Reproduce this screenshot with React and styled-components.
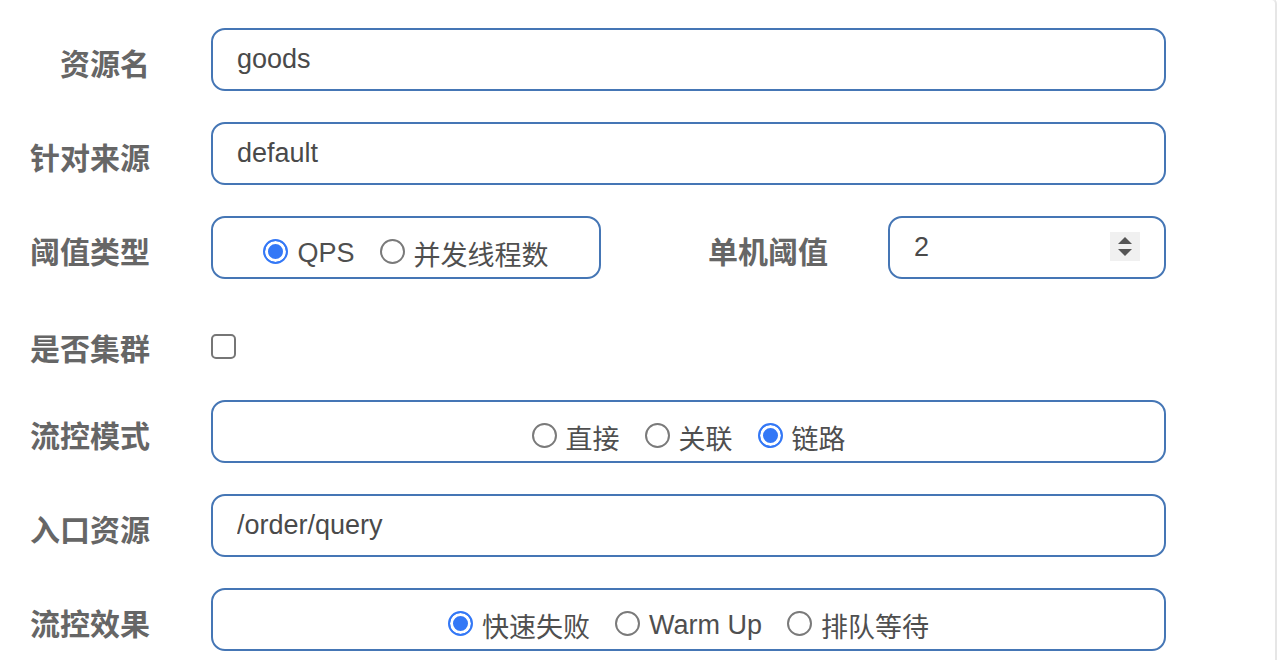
import React, { useState } from "react";
import styled, { createGlobalStyle, css } from "styled-components";

const GlobalStyle = createGlobalStyle`
  html, body {
    margin: 0;
    padding: 0;
    background: #ffffff;
  }
  body {
    font-family: "Liberation Sans", "Noto Sans CJK SC", sans-serif;
  }
`;

const Panel = styled.div`
  width: 1277px;
  height: 662px;
  box-sizing: border-box;
  border-right: 2px solid #e6e6e6;
  border-top: 2px solid #ececec;
  border-top-right-radius: 6px;
  margin-top: -2px;
  background: #fff;
  overflow: hidden;
`;

const Form = styled.div`
  display: flex;
  flex-direction: column;
  gap: 31px;
  padding-top: 28px;
`;

const Row = styled.div`
  box-sizing: border-box;
  display: flex;
  align-items: center;
  height: ${(p) => p.h || 63}px;
  ${(p) => p.shift && css`padding-top: ${p.shift}px;`}
`;

const Label = styled.div`
  width: ${(p) => p.w || 150}px;
  flex: none;
  text-align: right;
  font-size: 30px;
  font-weight: bold;
  color: #666;
  padding-top: ${(p) => p.drop ?? 4}px;
  margin-right: ${(p) => p.gap ?? 61}px;
  white-space: nowrap;
`;

const Box = styled.div`
  box-sizing: border-box;
  width: ${(p) => p.w || 955}px;
  height: 63px;
  flex: none;
  border: 2px solid #4576b5;
  border-radius: 14px;
  display: flex;
  align-items: center;
  position: relative;
`;

const Input = styled.input`
  border: none;
  outline: none;
  background: transparent;
  width: 100%;
  padding: 0 0 0 24px;
  font-family: inherit;
  font-size: 27px;
  color: #4a4a4a;
`;

const Spinner = styled.div`
  position: absolute;
  right: 24px;
  top: 14px;
  width: 30px;
  height: 29px;
  background: #f0f0f0;
  display: flex;
  flex-direction: column;
  align-items: center;
  justify-content: center;
  gap: 5px;
`;

const Tri = styled.span`
  width: 0;
  height: 0;
  border-left: 7px solid transparent;
  border-right: 7px solid transparent;
  ${(p) =>
    p.down
      ? css`border-top: 7px solid #555;`
      : css`border-bottom: 7px solid #555;`}
`;

const Group = styled.div`
  display: flex;
  align-items: center;
  justify-content: center;
  width: 100%;
  padding-top: 11px;
  gap: 25px;
`;

const Option = styled.label`
  display: flex;
  align-items: center;
  gap: 9px;
  font-size: 27px;
  color: #4f4f4f;
  cursor: pointer;
  white-space: nowrap;
`;

const Dot = styled.span`
  box-sizing: border-box;
  width: 25px;
  height: 25px;
  border-radius: 50%;
  flex: none;
  margin-top: -4px;
  border: 2px solid ${(p) => (p.on ? "#3478f6" : "#7a7a7a")};
  background: ${(p) => (p.on ? "#3478f6" : "#fff")};
  box-shadow: ${(p) => (p.on ? "inset 0 0 0 3px #fff" : "none")};
`;

const Check = styled.span`
  box-sizing: border-box;
  width: 25px;
  height: 25px;
  border: 2px solid #767676;
  border-radius: 5px;
  background: #fff;
`;

function Radios({ options, value, onChange }) {
  return (
    <Group>
      {options.map((o) => (
        <Option key={o} onClick={() => onChange(o)}>
          <Dot on={value === o} />
          {o}
        </Option>
      ))}
    </Group>
  );
}

export default function App() {
  const [grade, setGrade] = useState("QPS");
  const [strategy, setStrategy] = useState("链路");
  const [behavior, setBehavior] = useState("快速失败");

  return (
    <Panel>
      <GlobalStyle />
      <Form>
        <Row>
          <Label>资源名</Label>
          <Box>
            <Input defaultValue="goods" />
          </Box>
        </Row>
        <Row>
          <Label>针对来源</Label>
          <Box>
            <Input defaultValue="default" />
          </Box>
        </Row>
        <Row>
          <Label>阈值类型</Label>
          <Box w={390}>
            <Radios options={["QPS", "并发线程数"]} value={grade} onChange={setGrade} />
          </Box>
          <Label w={227} gap={60}>单机阈值</Label>
          <Box w={278}>
            <Input defaultValue="2" />
            <Spinner>
              <Tri />
              <Tri down />
            </Spinner>
          </Box>
        </Row>
        <Row h={59} shift={14}>
          <Label drop={0}>是否集群</Label>
          <Check />
        </Row>
        <Row>
          <Label>流控模式</Label>
          <Box>
            <Radios options={["直接", "关联", "链路"]} value={strategy} onChange={setStrategy} />
          </Box>
        </Row>
        <Row>
          <Label>入口资源</Label>
          <Box>
            <Input defaultValue="/order/query" />
          </Box>
        </Row>
        <Row>
          <Label>流控效果</Label>
          <Box>
            <Radios options={["快速失败", "Warm Up", "排队等待"]} value={behavior} onChange={setBehavior} />
          </Box>
        </Row>
      </Form>
    </Panel>
  );
}
